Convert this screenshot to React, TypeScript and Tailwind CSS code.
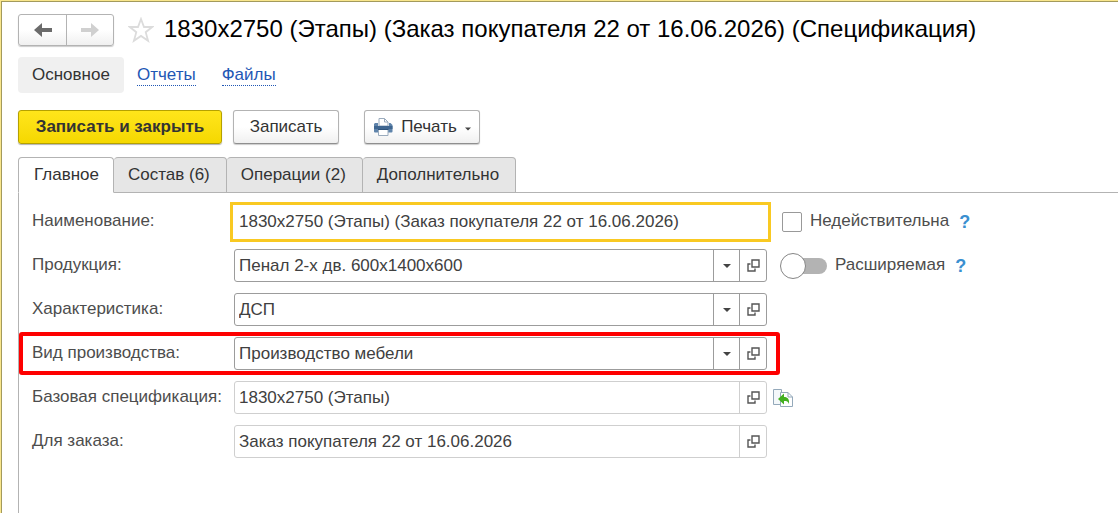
import { useState } from "react"
import type { ReactNode } from "react"
import clsx from "clsx"

const TABS = ["Главное", "Состав (6)", "Операции (2)", "Дополнительно"]

const buttonStyles =
  "flex h-[34px] items-center justify-center rounded-[3px] border border-[#b3b3b3] border-b-[#8f8f8f] bg-linear-to-b from-white from-50% to-[#f0f0f0] text-[#333] shadow-[0_1px_1px_rgba(0,0,0,0.2)]"

function ArrowIcon({ className }: { className?: string }) {
  return (
    <svg width="18" height="14" viewBox="0 0 18 14" className={className} fill="currentColor">
      <path d="M0 7 8 0v5h10v4H8v5z" />
    </svg>
  )
}

function StarIcon() {
  return (
    <svg width="26" height="26" viewBox="0 0 26 26" fill="none" stroke="#dcdcdc" strokeWidth="1.8">
      <path d="m13 2 3 8h8.2l-6.500 5.200 2.400 8.600L13 18.900l-7.100 4.900 2.400-8.600L1.800 10H10z" />
    </svg>
  )
}

function PrinterIcon() {
  return (
    <svg width="20" height="20" viewBox="0 0 20 20">
      <path d="M6 9V1.500h5.500L15 5v4z" fill="#fff" stroke="#9aabbd" />
      <path d="M11.500 1.500V5H15" fill="none" stroke="#9aabbd" />
      <path d="M2 6h3v3h11V6h1.500L19.500 8v6.500a1 1 0 0 1-1 1H2a1 1 0 0 1-1-1V7z" fill="#5f84ab" />
      <path d="M1 9h18.500v3H1z" fill="#3f6690" />
      <path d="M5.500 12.500h9.500v6H5.500z" fill="#fff" stroke="#9aabbd" />
      <path d="M5 12.500h10.500" stroke="#2f547c" />
    </svg>
  )
}

function OpenIcon() {
  return (
    <svg width="13" height="13" viewBox="0 0 13 13" fill="none" stroke="#555" strokeWidth="1.4">
      <path d="M5 1h7v7H5z" />
      <path d="M3.500 5H1v7h7V9.500" />
    </svg>
  )
}

function CaretIcon({ className }: { className?: string }) {
  return (
    <svg width="8" height="4" viewBox="0 0 8 4" className={className} fill="#444">
      <path d="M0 0h8L4 4z" />
    </svg>
  )
}

function CopyFromIcon() {
  return (
    <svg width="20" height="20" viewBox="0 0 20 20" fill="#fff" stroke="#94a9ba">
      <path d="M.5 1.500h8v15h-8z" fill="#f4f8fa" />
      <path d="M7.500 4.500H15l4.500 4.500v9.500h-12z" />
      <path d="M15 4.500V9h4.500" fill="none" />
      <path d="m5 11 6-5.500v3.500c4 0 5.500 2.500 5 7-1-2.500-2-3-5-3v3.500z" fill="#43b020" stroke="none" />
    </svg>
  )
}

function HelpButton({ topic, className }: { topic: string; className?: string }) {
  return (
    <button type="button" aria-label={`Справка: ${topic}`} className={clsx("text-[18px] font-bold text-[#3a8fd0]", className)}>
      ?
    </button>
  )
}

interface FieldProps {
  id: string
  label: string
  value: string
  focused?: boolean
  muted?: boolean
  select?: boolean
  open?: boolean
  highlighted?: boolean
  children?: ReactNode
}

/**
 * Строка формы: подпись, поле ввода с кнопками выбора и открытия, дополнительные элементы справа
 */
function Field({ id, label, value, focused, muted, select, open, highlighted, children }: FieldProps) {
  const line = muted ? "border-[#cfcfcf]" : "border-[#9c9c9c]"

  return (
    <div className="flex h-[33px] items-center">
      <div className="relative flex w-full max-w-[735px] items-center">
        <label htmlFor={id} className="w-[202px] shrink-0 pb-[2px] whitespace-nowrap text-[#4d4d4d]">
          {label}
        </label>
        <div
          className={clsx(
            "flex min-w-0 flex-1 overflow-hidden bg-white",
            focused ? "-m-1 h-10 border-3 border-[#f9c922] px-[2px]" : "h-[33px] rounded-[3px] border",
            !focused && line
          )}
        >
          <input id={id} type="text" defaultValue={value} className="min-w-0 flex-1 px-1 text-[#404040] outline-none" />
          {select && (
            <button type="button" aria-label="Выбрать из списка" className={clsx("flex w-[26px] items-center justify-center border-l", line)}>
              <CaretIcon />
            </button>
          )}
          {open && (
            <button type="button" aria-label="Открыть" className={clsx("flex w-[27px] items-center justify-center border-l", line)}>
              <OpenIcon />
            </button>
          )}
        </div>
        {highlighted && (
          <div className="pointer-events-none absolute -inset-x-[13px] -inset-y-[5px] rounded-[3px] border-4 border-[#fe0000]" />
        )}
      </div>
      {children}
    </div>
  )
}

export default function App() {
  const [activeTab, setActiveTab] = useState(TABS[0])

  return (
    <div className="flex min-h-screen border-t border-l border-[#f9e68c] bg-white font-['Liberation_Sans',Arial,sans-serif] text-[17px] leading-5">
      <main className="flex min-w-0 flex-1 flex-col border-t border-l border-[#a39a5c] pt-3 pl-4">
        <header className="flex items-center">
          <div className="flex h-8 rounded-[3px] border border-[#b3b3b3] bg-linear-to-b from-white from-50% to-[#f0f0f0] shadow-[0_1px_1px_rgba(0,0,0,0.2)]">
            <button type="button" aria-label="Назад" className="flex w-12 items-center justify-center border-r border-[#b3b3b3]">
              <ArrowIcon className="text-[#6b6b6b]" />
            </button>
            <button type="button" aria-label="Вперед" className="flex w-[46px] items-center justify-center">
              <ArrowIcon className="rotate-180 text-[#d0d0d0]" />
            </button>
          </div>
          <button type="button" aria-label="Добавить в избранное" className="ml-[14px]">
            <StarIcon />
          </button>
          <h1 className="ml-[10px] pb-[2px] text-[24px] leading-[30px] whitespace-nowrap text-black">
            1830x2750 (Этапы) (Заказ покупателя 22 от 16.06.2026) (Спецификация)
          </h1>
        </header>

        <nav className="mt-[11px] flex h-9 items-center">
          <a href="#main" className="flex h-9 items-center rounded-[4px] bg-[#f0f0f0] px-[14px] text-[#333]">
            Основное
          </a>
          <a href="#reports" className="ml-[13px] border-b border-dotted border-[#1f57b5] text-[#1f57b5]">
            Отчеты
          </a>
          <a href="#files" className="ml-[26px] border-b border-dotted border-[#1f57b5] text-[#1f57b5]">
            Файлы
          </a>
        </nav>

        <div className="mt-[17px] flex">
          <button
            type="button"
            className="flex h-[34px] w-[204px] items-center justify-center rounded-[3px] border border-[#b5a100] bg-linear-to-b from-[#ffe51a] to-[#f5d800] font-bold text-[#333] shadow-[0_1px_1px_rgba(0,0,0,0.3)]"
          >
            Записать и закрыть
          </button>
          <button type="button" className={clsx(buttonStyles, "ml-[11px] w-[106px]")}>
            Записать
          </button>
          <button type="button" className={clsx(buttonStyles, "ml-[25px] w-[116px]")}>
            <PrinterIcon />
            <span className="ml-2">Печать</span>
            <CaretIcon className="mt-1 ml-2 w-[6px]" />
          </button>
        </div>

        <div role="tablist" className="mt-[13px] flex h-9">
          {TABS.map((tab) => (
            <button
              key={tab}
              type="button"
              role="tab"
              aria-selected={tab === activeTab}
              onClick={() => setActiveTab(tab)}
              className={clsx(
                "rounded-t-[4px] border-t border-r border-b border-[#b3b3b3] pr-4 pl-[14px] whitespace-nowrap text-[#333] first:border-l first:pr-[14px] first:pl-[15px]",
                tab === activeTab ? "border-b-white bg-white" : "bg-[#e6e6e6]"
              )}
            >
              {tab}
            </button>
          ))}
          <div className="flex-1 border-b border-[#b3b3b3]" />
        </div>

        <form className="flex flex-1 flex-col gap-[11px] border-l border-[#b3b3b3] pt-3 pl-[13px]">
          <Field id="name" label="Наименование:" value="1830x2750 (Этапы) (Заказ покупателя 22 от 16.06.2026)" focused>
            <input id="invalid" type="checkbox" className="ml-[15px] size-5 shrink-0 appearance-none rounded-[2px] border border-[#999] bg-white" />
            <label htmlFor="invalid" className="ml-2 pb-[2px] text-[#4d4d4d]">
              Недействительна
            </label>
            <HelpButton topic="Недействительна" className="ml-[10px]" />
          </Field>
          <Field id="product" label="Продукция:" value="Пенал 2-х дв. 600x1400x600" select open>
            <input
              id="extensible"
              type="checkbox"
              role="switch"
              className="relative ml-[13px] h-[26px] w-[47px] shrink-0 appearance-none before:absolute before:top-[5px] before:right-0 before:h-4 before:w-9 before:rounded-full before:bg-[#b3b3b3] after:absolute after:top-0 after:left-0 after:size-[26px] after:rounded-full after:border after:border-[#858585] after:bg-white checked:after:left-[21px]"
            />
            <label htmlFor="extensible" className="ml-2 pb-[2px] text-[#4d4d4d]">
              Расширяемая
            </label>
            <HelpButton topic="Расширяемая" className="ml-[10px]" />
          </Field>
          <Field id="feature" label="Характеристика:" value="ДСП" select open />
          <Field id="kind" label="Вид производства:" value="Производство мебели" select open highlighted />
          <Field id="base" label="Базовая спецификация:" value="1830x2750 (Этапы)" muted open>
            <button type="button" aria-label="Заполнить по базовой спецификации" className="ml-[6px]">
              <CopyFromIcon />
            </button>
          </Field>
          <Field id="order" label="Для заказа:" value="Заказ покупателя 22 от 16.06.2026" muted open />
        </form>
      </main>
    </div>
  )
}
